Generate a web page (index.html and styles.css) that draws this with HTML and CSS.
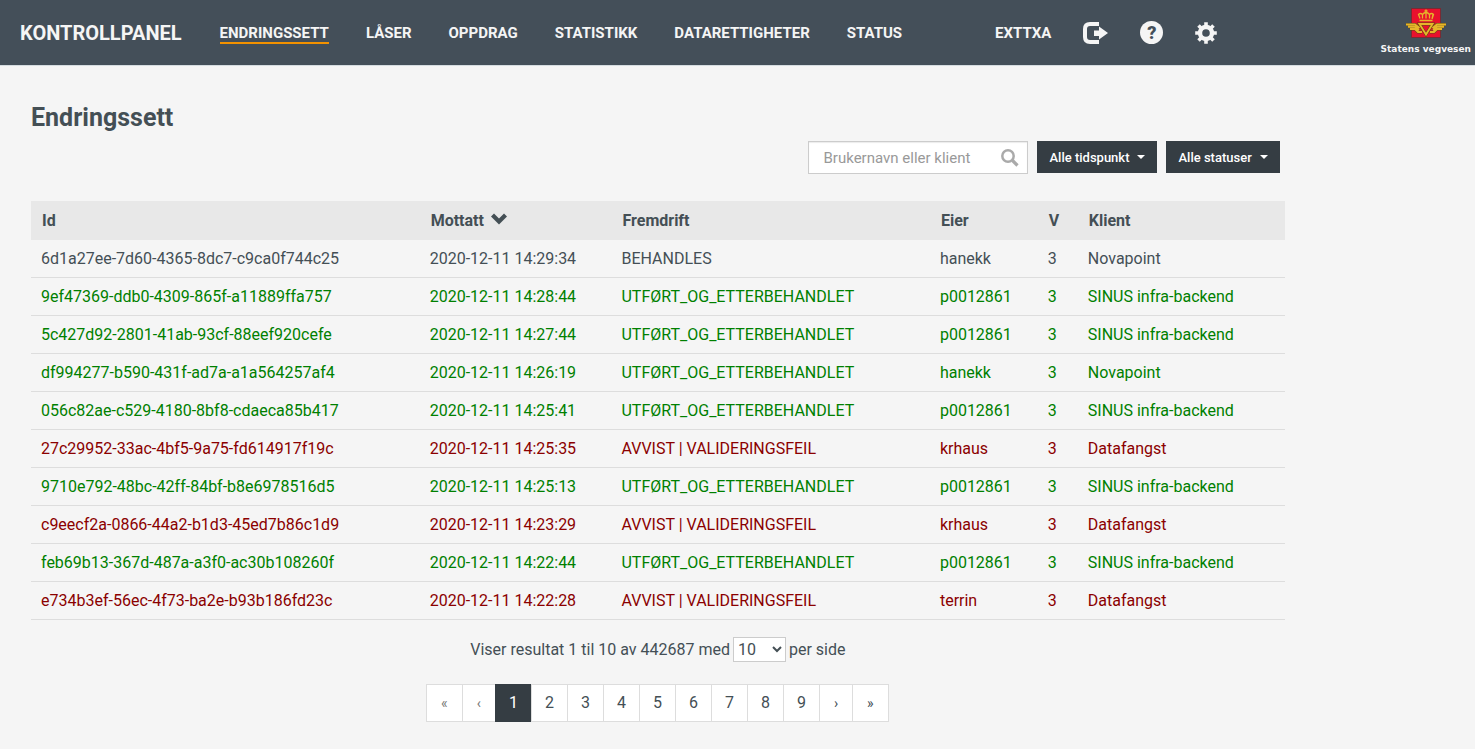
FILE: index.html
```html
<!DOCTYPE html>
<html lang="no">
<head>
    <meta charset="UTF-8">
    <meta name="viewport" content="width=device-width, initial-scale=1.0">
    <title>Kontrollpanel - Endringssett</title>
    <link rel="stylesheet" href="styles.css">
</head>
<body>
    <header class="topbar">
        <a class="brand" href="#">KONTROLLPANEL</a>
        <nav class="main-nav">
            <a class="active" href="#">ENDRINGSSETT</a>
            <a href="#">LÅSER</a>
            <a href="#">OPPDRAG</a>
            <a href="#">STATISTIKK</a>
            <a href="#">DATARETTIGHETER</a>
            <a href="#">STATUS</a>
        </nav>
        <div class="user-nav">
            <a href="#">EXTTXA</a>
            <button type="button" aria-label="Logg ut">
                <svg width="25" height="22" viewBox="0 0 25 22" fill="currentColor">
                    <path d="M16 0H7Q0 0 0 7v8q0 7 7 7h9v-4H7q-3 0-3-3V7q0-3 3-3h9z"/>
                    <path d="M11 8.500h5V4.500l9 6.500-9 6.500V14h-5z"/>
                </svg>
            </button>
            <button type="button" aria-label="Hjelp"><span class="help">?</span></button>
            <button type="button" aria-label="Innstillinger">
                <svg width="22" height="22" viewBox="-11 -11 22 22" fill="none" stroke="currentColor">
                    <circle r="6" stroke-width="4.400"/>
                    <path stroke-width="3.600" d="M0-10.800V-7M0 10.800V7M-10.800 0H-7M10.800 0H7M-7.500-7.500l2.500 2.500M7.500-7.500L5-5M-7.500 7.500L-5 5M7.500 7.500L5 5"/>
                </svg>
            </button>
        </div>
        <a class="logo" href="#">
            <svg width="42" height="31" viewBox="0 0 42 31">
                <rect x="6.500" y="0.500" width="29" height="29" fill="#e8112d" stroke="#7a2a33"/>
                <g fill="none" stroke="#5c4a14" stroke-width="3">
                    <path d="M1 16.500h9l4.500 3.500M3 18.800h7l4 3.500M5 21h5l3 3h4M41 16.500h-9l-4.500 3.500M39 18.800h-7l-4 3.500M37 21h-5l-3 3h-4"/>
                    <path d="M14.500 16h13L21 26.500z"/>
                </g>
                <g fill="none" stroke="#e6b52a" stroke-width="1.900">
                    <path d="M1 16.500h9l4.500 3.500M3 18.800h7l4 3.500M5 21h5l3 3h4M41 16.500h-9l-4.500 3.500M39 18.800h-7l-4 3.500M37 21h-5l-3 3h-4"/>
                    <path d="M14.500 16h13L21 26.500z"/>
                </g>
                <g fill="none" stroke="#e6b52a" stroke-width="1.300">
                    <path d="M14.500 12.500h13M15 10.500L13.500 6.500q2-2 4 0v4M28 6.500l-1 4.500M17.500 6.500q1.500-2 3.500-2 2 0 3.500 2v4M24.500 6.500q2-2 4 0l-1.500 4.500M21 1.500v9M19.500 3h3"/>
                </g>
            </svg>
            <span>Statens vegvesen</span>
        </a>
    </header>

    <main class="content">
        <h1>Endringssett</h1>

        <form class="filters">
            <div class="search">
                <input type="text" id="search" placeholder="Brukernavn eller klient" aria-label="Brukernavn eller klient">
                <svg width="18" height="18" viewBox="0 0 18 18" fill="none" stroke="#aaa">
                    <circle cx="7" cy="7" r="5.700" stroke-width="2.500"/>
                    <path d="M11.500 11.500l5 5" stroke-width="3.200"/>
                </svg>
            </div>
            <button class="dropdown" type="button">Alle tidspunkt <span class="caret"></span></button>
            <button class="dropdown" type="button">Alle statuser <span class="caret"></span></button>
        </form>

        <table class="changesets">
            <thead>
                <tr>
                    <th class="col-id">Id</th>
                    <th class="col-received">
                        <button type="button">Mottatt
                            <svg width="16" height="16" viewBox="0 0 16 16" fill="currentColor">
                                <path d="M0 3.500L3 0.500l5 5 5-5 3 3-8 8z"/>
                            </svg>
                        </button>
                    </th>
                    <th class="col-progress">Fremdrift</th>
                    <th class="col-owner">Eier</th>
                    <th class="col-version">V</th>
                    <th class="col-client">Klient</th>
                </tr>
            </thead>
            <tbody>
                <tr>
                    <td>6d1a27ee-7d60-4365-8dc7-c9ca0f744c25</td>
                    <td>2020-12-11 14:29:34</td>
                    <td>BEHANDLES</td>
                    <td>hanekk</td>
                    <td>3</td>
                    <td>Novapoint</td>
                </tr>
                <tr class="done">
                    <td>9ef47369-ddb0-4309-865f-a11889ffa757</td>
                    <td>2020-12-11 14:28:44</td>
                    <td>UTFØRT_OG_ETTERBEHANDLET</td>
                    <td>p0012861</td>
                    <td>3</td>
                    <td>SINUS infra-backend</td>
                </tr>
                <tr class="done">
                    <td>5c427d92-2801-41ab-93cf-88eef920cefe</td>
                    <td>2020-12-11 14:27:44</td>
                    <td>UTFØRT_OG_ETTERBEHANDLET</td>
                    <td>p0012861</td>
                    <td>3</td>
                    <td>SINUS infra-backend</td>
                </tr>
                <tr class="done">
                    <td>df994277-b590-431f-ad7a-a1a564257af4</td>
                    <td>2020-12-11 14:26:19</td>
                    <td>UTFØRT_OG_ETTERBEHANDLET</td>
                    <td>hanekk</td>
                    <td>3</td>
                    <td>Novapoint</td>
                </tr>
                <tr class="done">
                    <td>056c82ae-c529-4180-8bf8-cdaeca85b417</td>
                    <td>2020-12-11 14:25:41</td>
                    <td>UTFØRT_OG_ETTERBEHANDLET</td>
                    <td>p0012861</td>
                    <td>3</td>
                    <td>SINUS infra-backend</td>
                </tr>
                <tr class="rejected">
                    <td>27c29952-33ac-4bf5-9a75-fd614917f19c</td>
                    <td>2020-12-11 14:25:35</td>
                    <td>AVVIST | VALIDERINGSFEIL</td>
                    <td>krhaus</td>
                    <td>3</td>
                    <td>Datafangst</td>
                </tr>
                <tr class="done">
                    <td>9710e792-48bc-42ff-84bf-b8e6978516d5</td>
                    <td>2020-12-11 14:25:13</td>
                    <td>UTFØRT_OG_ETTERBEHANDLET</td>
                    <td>p0012861</td>
                    <td>3</td>
                    <td>SINUS infra-backend</td>
                </tr>
                <tr class="rejected">
                    <td>c9eecf2a-0866-44a2-b1d3-45ed7b86c1d9</td>
                    <td>2020-12-11 14:23:29</td>
                    <td>AVVIST | VALIDERINGSFEIL</td>
                    <td>krhaus</td>
                    <td>3</td>
                    <td>Datafangst</td>
                </tr>
                <tr class="done">
                    <td>feb69b13-367d-487a-a3f0-ac30b108260f</td>
                    <td>2020-12-11 14:22:44</td>
                    <td>UTFØRT_OG_ETTERBEHANDLET</td>
                    <td>p0012861</td>
                    <td>3</td>
                    <td>SINUS infra-backend</td>
                </tr>
                <tr class="rejected">
                    <td>e734b3ef-56ec-4f73-ba2e-b93b186fd23c</td>
                    <td>2020-12-11 14:22:28</td>
                    <td>AVVIST | VALIDERINGSFEIL</td>
                    <td>terrin</td>
                    <td>3</td>
                    <td>Datafangst</td>
                </tr>
            </tbody>
        </table>

        <div class="page-size">
            <label for="per-page">Viser resultat 1 til 10 av 442687 med</label>
            <select id="per-page">
                <option>10</option>
                <option>25</option>
                <option>50</option>
            </select>
            <span>per side</span>
        </div>

        <nav class="pagination">
            <a class="arrow muted" href="#">«</a>
            <a class="arrow muted" href="#">‹</a>
            <a class="current" href="#">1</a>
            <a href="#">2</a>
            <a href="#">3</a>
            <a href="#">4</a>
            <a href="#">5</a>
            <a href="#">6</a>
            <a href="#">7</a>
            <a href="#">8</a>
            <a href="#">9</a>
            <a class="arrow" href="#">›</a>
            <a class="arrow" href="#">»</a>
        </nav>
    </main>
</body>
</html>
```
FILE: styles.css
```css
* { box-sizing: border-box; }
body { margin: 0; background: #f5f5f5; color: #444f55; font-family: Roboto, "Liberation Sans", sans-serif; font-size: 16px; line-height: 24px; }
a { color: inherit; text-decoration: none; }
button, input, select { font-family: inherit; color: inherit; }
button { border: 0; padding: 0; background: none; cursor: pointer; }
svg { display: block; }

/* Top bar */
.topbar { display: flex; align-items: center; height: 66px; padding: 0 4px 0 20px; background: #444f59; border-bottom: 1px solid #d5dce0; color: #f5f5f5; font-weight: 700; }
.brand { margin-right: 38px; font-size: 20px; }
.main-nav, .user-nav { display: flex; align-items: center; font-size: 15px; line-height: 18px; }
.main-nav { gap: 37px; }
.main-nav a { border-top: 2px solid transparent; border-bottom: 2px solid transparent; }
.main-nav .active { border-bottom-color: #f39200; }
.user-nav { gap: 32px; margin-left: 93px; }
.help { display: block; width: 23px; height: 23px; border-radius: 50%; background: #f5f5f5; color: #444f59; font-size: 18px; font-weight: 900; line-height: 23px; }
.logo { display: flex; flex-direction: column; align-items: center; margin-left: auto; padding-bottom: 2px; font-family: "DejaVu Sans", sans-serif; font-size: 9px; line-height: 12px; gap: 4px; }

/* Content */
.content { width: 85%; margin-left: 31px; padding-top: 37px; }
h1 { margin: 0 0 8px; font-size: 25px; line-height: 30px; }
.filters { display: flex; justify-content: flex-end; align-items: flex-start; gap: 9px; margin: 0 5px 27px 0; }
.search { display: flex; align-items: center; width: 220px; height: 33px; padding: 0 8px 0 14px; background: #fff; border: 1px solid #ccc; box-shadow: inset 0 1px 1px rgba(0, 0, 0, 0.08); }
.search input { flex: 1; min-width: 0; border: 0; padding: 0; background: none; font-size: 15px; outline: none; }
.search input::placeholder { color: #999; opacity: 1; }
.dropdown { display: flex; align-items: center; gap: 8px; height: 32px; padding: 0 12px; background: #353d43; color: #fff; font-size: 13px; font-weight: 500; }
.caret { border-top: 4px solid; border-left: 4px solid transparent; border-right: 4px solid transparent; }

/* Table */
.changesets { width: 100%; table-layout: fixed; border-collapse: separate; border-spacing: 0; }
.changesets th { height: 39px; padding: 0 11px; background: #e8e8e8; font-weight: 700; text-align: left; }
.changesets td { height: 38px; padding: 0 10px; border-bottom: 1px solid #ddd; white-space: nowrap; }
.changesets th button { display: flex; align-items: center; gap: 7px; font-size: 16px; font-weight: 700; }
.col-id { width: 31%; }
.col-received { width: 15.3%; }
.col-progress { width: 25.4%; }
.col-owner { width: 8.6%; }
.col-version { width: 3.2%; }
.done { color: #008000; }
.rejected { color: #8b0000; }

/* Paging */
.page-size { display: flex; justify-content: center; align-items: center; gap: 3px; margin-top: 17px; }
.page-size select { width: 53px; height: 25px; border: 1px solid #ccc; background: #fff; font-size: 16px; }
.pagination { display: flex; justify-content: center; margin-top: 22px; }
.pagination a { margin-left: -1px; padding: 6px 13px; background: #fff; border: 1px solid #ddd; }
.pagination .current { background: #353d43; border-color: #353d43; color: #fff; }
.pagination .arrow { padding: 6px 14px; font-size: 14px; }
.pagination .muted { color: #777; }
```
